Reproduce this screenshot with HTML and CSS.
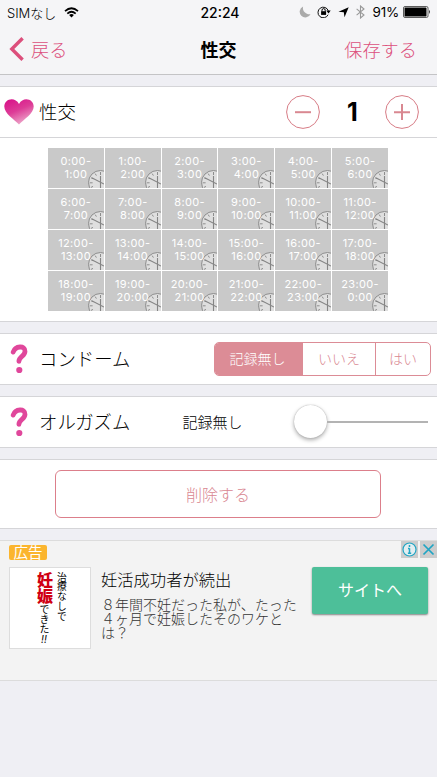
FILE: index.html
```html
<!DOCTYPE html>
<html lang="ja">
<head>
<meta charset="utf-8">
<title>性交</title>
<link rel="stylesheet" href="styles.css">
</head>
<body>
<svg class="defs" width="0" height="0">
  <defs>
    <linearGradient id="pink" x1="0.2" y1="0" x2="0.7" y2="1">
      <stop offset="0" stop-color="#d9148a"/><stop offset="0.45" stop-color="#dd3c97"/><stop offset="1" stop-color="#efb3cf"/>
    </linearGradient>
    <symbol id="clock" viewBox="0 0 16 18">
      <circle cx="12.5" cy="12.5" r="12" fill="#dfdfdf" stroke="#8d8d8d" stroke-width="1"/>
      <path d="M12.5 2v3M7.2 3.6l1.2 2M3 7.700l2.200 1.200M1.600 12.800h3M3 17.400l2-1" stroke="#8d8d8d" fill="none"/>
      <path d="M3.800 7.800L16 14M12.500 6v12" stroke="#858585" stroke-width="1.100" fill="none"/>
    </symbol>
    <symbol id="question" viewBox="0 0 18 30">
      <path d="M3.200 8.100C5.300 1.700 15.200 1.200 15 7.300C14.800 12.400 9 12.300 8.900 17.400" fill="none" stroke="#e0479b" stroke-width="4.800" stroke-linecap="round"/>
      <circle cx="9.300" cy="26" r="3.100" fill="#e0479b"/>
    </symbol>
  </defs>
</svg>
<header class="top">
  <div class="status">
    <div class="carrier"><span>SIMなし</span>
      <svg width="15" height="11" viewBox="0 0 15 11"><path d="M1 4.100Q7.500-1.600 14 4.100M3.300 6.600Q7.500 2.900 11.700 6.600" fill="none" stroke="#000" stroke-width="1.700"/><path d="M5.100 8.100Q7.500 6.100 9.900 8.100L7.500 10.600Z"/></svg>
    </div>
    <span class="time">22:24</span>
    <div class="indicators">
      <svg class="moon" width="12" height="12" viewBox="0 0 12 12"><path d="M4.100.5A6.200 6.200 0 0 0 11.600 8A5.700 5.700 0 1 1 4.100.5Z" fill="#aaa"/></svg>
      <svg class="lock" width="14" height="12" viewBox="0 0 14 12"><path d="M11.100 8.700A5.300 5.300 0 1 1 11.300 4.800" fill="none" stroke="#111"/><path d="M9.300 4.600h4.400l-2.200 3z"/><rect x="4.100" y="5.200" width="5" height="3.700"/><path d="M5 5.400V4.200a1.600 1.600 0 0 1 3.200 0v1.200" fill="none" stroke="#000"/></svg>
      <svg class="arrow" width="11" height="11" viewBox="0 0 11 11"><path d="M10.700.3L6.500 10.300L5.800 5.300L.5 4.800Z"/></svg>
      <svg class="bt" width="9" height="14" viewBox="0 0 9 14"><path d="M.6 3.900L8 10L4.500 13V1L8 4L.6 10.100" fill="none" stroke="#999" stroke-width="1.100"/></svg>
      <span class="percent">91%</span>
      <svg class="battery" width="28" height="12" viewBox="0 0 28 12"><rect x=".5" y=".5" width="24.500" height="11" rx="1.500" fill="#fff" stroke="#333" stroke-width=".8"/><rect x="1.500" y="1.500" width="22" height="9" rx=".6"/><path d="M26.200 4q1.500 1 0 4z"/></svg>
    </div>
  </div>
  <nav class="nav">
    <a class="back"><svg width="15" height="24" viewBox="0 0 15 24"><path d="M13.600 1.200L2.800 12L13.600 22.800" fill="none" stroke="#dc4f7c" stroke-width="3.400"/></svg><span>戻る</span></a>
    <h1>性交</h1>
    <a class="save">保存する</a>
  </nav>
</header>
<main>
  <section class="row count">
    <svg class="heart" width="30" height="26" viewBox="0 0 30 26"><path d="M15 25.500C10 20.500.3 14.500.3 7.600C.3-.3 11-2.700 15 5C19-2.700 29.700-.3 29.700 7.600C29.700 14.500 20 20.500 15 25.500Z" fill="url(#pink)"/></svg>
    <span class="label">性交</span>
    <svg class="minus" width="34" height="34" viewBox="0 0 34 34"><path d="M9 17.200h16" stroke="#d98891" stroke-width="2"/><circle cx="17" cy="17" r="16.400" fill="none" stroke="#d77c86"/></svg>
    <strong>1</strong>
    <svg class="plus" width="34" height="34" viewBox="0 0 34 34"><path d="M9 17.200h16M17 9v16" stroke="#d98891" stroke-width="2"/><circle cx="17" cy="17" r="16.400" fill="none" stroke="#d77c86"/></svg>
  </section>
  <section class="hours">
    <div class="cell"><svg><use href="#clock"/></svg><p>0:00-<br>1:00</p></div>
    <div class="cell"><svg><use href="#clock"/></svg><p>1:00-<br>2:00</p></div>
    <div class="cell"><svg><use href="#clock"/></svg><p>2:00-<br>3:00</p></div>
    <div class="cell"><svg><use href="#clock"/></svg><p>3:00-<br>4:00</p></div>
    <div class="cell"><svg><use href="#clock"/></svg><p>4:00-<br>5:00</p></div>
    <div class="cell"><svg><use href="#clock"/></svg><p>5:00-<br>6:00</p></div>
    <div class="cell"><svg><use href="#clock"/></svg><p>6:00-<br>7:00</p></div>
    <div class="cell"><svg><use href="#clock"/></svg><p>7:00-<br>8:00</p></div>
    <div class="cell"><svg><use href="#clock"/></svg><p>8:00-<br>9:00</p></div>
    <div class="cell"><svg><use href="#clock"/></svg><p>9:00-<br>10:00</p></div>
    <div class="cell"><svg><use href="#clock"/></svg><p>10:00-<br>11:00</p></div>
    <div class="cell"><svg><use href="#clock"/></svg><p>11:00-<br>12:00</p></div>
    <div class="cell"><svg><use href="#clock"/></svg><p>12:00-<br>13:00</p></div>
    <div class="cell"><svg><use href="#clock"/></svg><p>13:00-<br>14:00</p></div>
    <div class="cell"><svg><use href="#clock"/></svg><p>14:00-<br>15:00</p></div>
    <div class="cell"><svg><use href="#clock"/></svg><p>15:00-<br>16:00</p></div>
    <div class="cell"><svg><use href="#clock"/></svg><p>16:00-<br>17:00</p></div>
    <div class="cell"><svg><use href="#clock"/></svg><p>17:00-<br>18:00</p></div>
    <div class="cell"><svg><use href="#clock"/></svg><p>18:00-<br>19:00</p></div>
    <div class="cell"><svg><use href="#clock"/></svg><p>19:00-<br>20:00</p></div>
    <div class="cell"><svg><use href="#clock"/></svg><p>20:00-<br>21:00</p></div>
    <div class="cell"><svg><use href="#clock"/></svg><p>21:00-<br>22:00</p></div>
    <div class="cell"><svg><use href="#clock"/></svg><p>22:00-<br>23:00</p></div>
    <div class="cell"><svg><use href="#clock"/></svg><p>23:00-<br>0:00</p></div>
  </section>
  <section class="row">
    <svg class="question"><use href="#question"/></svg>
    <span class="label">コンドーム</span>
    <div class="segments"><span class="on">記録無し</span><span class="no">いいえ</span><span class="yes">はい</span></div>
  </section>
  <section class="row">
    <svg class="question"><use href="#question"/></svg>
    <span class="label">オルガズム</span>
    <span class="value">記録無し</span>
    <div class="slider"><i class="knob"></i><i class="track"></i></div>
  </section>
  <section class="remove"><button>削除する</button></section>
  <aside class="ad">
    <div class="adside">
      <span class="tag">広告</span>
      <div class="thumb">
        <div class="column"><b>妊娠</b><span class="small">できた<span class="bang">!!</span></span></div>
        <div class="column lead">治療なしで</div>
      </div>
    </div>
    <div class="copy"><h2>妊活成功者が続出</h2><p>８年間不妊だった私が、たった<br>４ヶ月で妊娠したそのワケと<br>は？</p></div>
    <div class="action">
      <div class="choices">
        <svg width="17" height="17" viewBox="0 0 17 17"><rect width="17" height="17" fill="#ccc"/><circle cx="8.500" cy="8.500" r="6.500" fill="#e3eef0" stroke="#1fa5c4" stroke-width="1.200"/><path d="M8.500 4v1.900M8.500 7.200v5M7 7.600h1.500M6.900 12.200h3.300" stroke="#1fa5c4" stroke-width="1.500"/></svg>
        <svg width="17" height="17" viewBox="0 0 17 17"><rect width="17" height="17" fill="#ccc"/><path d="M3.500 3.500l10 10M13.500 3.500l-10 10" stroke="#1fa5c4" stroke-width="1.700"/></svg>
      </div>
      <a class="visit">サイトへ</a>
    </div>
  </aside>
</main>
</body>
</html>
```
FILE: styles.css
```css
* { box-sizing: border-box; }
body {
  margin: 0;
  width: 437px;
  height: 777px;
  overflow: hidden;
  background: #efeff4;
  color: #000;
  font-family: Inter, "Noto Sans CJK JP", sans-serif;
  font-weight: 300;
}
svg { display: block; flex: none; }
.defs { position: absolute; }
h1, h2, p { margin: 0; }
span, a { white-space: nowrap; }
.top { height: 75px; background: #f5f5f7; border-bottom: 1px solid #c4c4c6; }
.status { height: 24px; display: grid; grid-template-columns: 1fr auto 1fr; align-items: center; font-size: 13px; }
.carrier { display: flex; align-items: center; gap: 8px; padding-left: 7px; }
.time { font-weight: 500; font-size: 14px; padding-left: 3px; }
.indicators { display: flex; align-items: center; justify-content: flex-end; padding-right: 6px; }
.lock { margin-left: 6px; }
.arrow { margin-left: 7px; }
.bt { margin-left: 7px; }
.percent { margin: 0 4px 0 7px; font-size: 13.5px; font-weight: 400; letter-spacing: -.2px; }
.nav { height: 50px; padding-bottom: 1px; display: grid; grid-template-columns: 1fr auto 1fr; align-items: center; color: #dc4f7c; font-size: 18.2px; }
.back { display: flex; align-items: center; gap: 7px; padding-left: 9px; }
.nav h1 { color: #000; font-size: 18px; font-weight: 700; }
.save { text-align: right; padding-right: 20px; }
.row {
  height: 52px;
  margin-top: 11px;
  display: flex;
  align-items: center;
  background: #fff;
  border-top: 1px solid #d5d5d8;
  border-bottom: 1px solid #d5d5d8;
}
.label { font-size: 18.4px; padding-bottom: 2px; }
.heart { margin: 0 5px 0 4px; }
.count strong { width: 65px; text-align: center; font-size: 25px; font-weight: 700; }
.minus { margin-left: auto; }
.plus { margin-right: 18px; }
.hours {
  height: 184px;
  padding: 10px 49px 10px 48px;
  display: grid;
  grid-template-columns: repeat(6, 1fr);
  grid-template-rows: repeat(4, 1fr);
  gap: 1px;
  background: #fff;
  border-bottom: 1px solid #d5d5d8;
}
.cell { position: relative; padding-top: 7px; background: #c9c9c9; }
.cell p { position: relative; color: #fff; text-align: center; font-size: 11px; line-height: 13px; letter-spacing: .35px; font-weight: 400; }
.cell svg { position: absolute; right: 0; bottom: 0; width: 16px; height: 18px; }
.question { width: 18px; height: 30px; margin: 0 11px 0 10px; }
.segments { display: flex; width: 217px; height: 34px; margin: 0 6px 0 auto; border: 1px solid #dc8c96; border-radius: 5px; overflow: hidden; color: #d98791; font-size: 14px; line-height: 32px; text-align: center; }
.segments .on { width: 88px; padding-right: 3px; background: #dc8c96; color: #fff; }
.segments .no { width: 73px; border-right: 1px solid #dc8c96; }
.segments .yes { flex: 1; }
.value { margin-left: 52px; padding-bottom: 2px; font-size: 15px; }
.slider { display: flex; align-items: center; width: 134px; margin: 0 9px 0 auto; }
.knob { width: 33px; height: 33px; margin-top: -2px; border-radius: 50%; background: #fff; box-shadow: 0 0 1px #999, 0 2px 4px #0005; }
.track { flex: 1; height: 2px; background: #b3b3b3; }
.remove { height: 70px; margin-top: 11px; display: flex; justify-content: center; align-items: center; background: #fff; border-top: 1px solid #d5d5d8; border-bottom: 1px solid #d5d5d8; }
.remove button { width: 326px; height: 48px; margin-right: 1px; padding-bottom: 2px; background: #fff; border: 1px solid #dc7f8b; border-radius: 6px; color: #d98791; font: inherit; font-size: 16px; }
.ad { height: 141px; margin-top: 11px; display: flex; background: #f3f3f3; border-top: 1px solid #dcdcdc; border-bottom: 1px solid #dcdcdc; }
.adside { padding: 4px 0 0 9px; }
.tag { display: block; width: 38px; height: 15px; border-radius: 2px; background: #fbb52e; color: #fff; font-size: 14.5px; line-height: 15px; text-align: center; font-weight: 400; }
.thumb { display: flex; gap: 2px; width: 82px; height: 82px; margin-top: 7px; background: #fff; border: 1px solid #ddd; padding: 4px 0 0 26px; }
.column { writing-mode: vertical-rl; width: 17px; height: 76px; line-height: 17px; font-size: 9.8px; white-space: nowrap; font-weight: 400; }
.column b { color: #d00012; font-size: 16px; font-weight: 900; }
.column.lead { width: 12px; line-height: 12px; }
.small { font-size: 10px; }
.bang { text-combine-upright: all; font-style: italic; }
.copy { width: 212px; padding: 27px 0 0 10px; }
.copy h2 { font-size: 16.3px; line-height: 24px; font-weight: 300; white-space: nowrap; }
.copy p { margin-top: 6px; font-size: 14px; line-height: 14px; color: #333; white-space: nowrap; }
.action { flex: 1; }
.choices { display: flex; justify-content: flex-end; gap: 2px; }
.visit { display: block; width: 116px; height: 47px; margin: 9px 0 0 9px; border-radius: 2px; background: #4dbf99; box-shadow: 0 1px 2px #0007; color: #fff; font-size: 16px; line-height: 46px; text-align: center; font-weight: 400; }
```
